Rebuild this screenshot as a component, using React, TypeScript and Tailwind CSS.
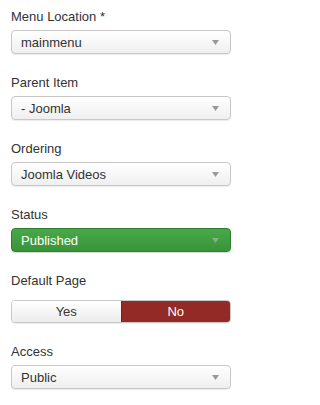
import React from 'react';

const Caret = ({ className }: { className: string }) => (
  <svg width="7" height="5" viewBox="0 0 7 5" className={className}>
    <path d="M0 0h7L3.5 5z" fill="currentColor" />
  </svg>
);

const Select = ({ value, green = false }: { value: string; green?: boolean }) => (
  <div
    className={
      green
        ? 'flex items-center justify-between h-[24px] w-[220px] rounded-[4px] border border-[#2f7d2f] bg-gradient-to-b from-[#48a848] to-[#3a943a] pl-[9px] pr-[11px] text-white shadow-[0_1px_1px_rgba(0,0,0,0.15)]'
        : 'flex items-center justify-between h-[24px] w-[220px] rounded-[4px] border border-[#c8c8c8] bg-gradient-to-b from-white to-[#efefef] pl-[9px] pr-[11px] text-[#333] shadow-[0_1px_1px_rgba(0,0,0,0.08)]'
    }
  >
    <span className="text-[13px] leading-none">{value}</span>
    <Caret className={green ? 'text-[#7fb27f]' : 'text-[#999]'} />
  </div>
);

const Field = ({ label, children }: { label: string; children: React.ReactNode }) => (
  <div className="flex flex-col">
    <label className="text-[13px] leading-[16px] text-[#333] mb-[5px]">{label}</label>
    {children}
  </div>
);

export default function App() {
  return (
    <div
      className="bg-white w-[276px] h-[405px] overflow-hidden pl-[11px] pt-[9px] flex flex-col gap-[21px]"
      style={{ fontFamily: '"Liberation Sans", Arial, sans-serif' }}
    >
      <Field label="Menu Location *">
        <Select value="mainmenu" />
      </Field>
      <Field label="Parent Item">
        <Select value="- Joomla" />
      </Field>
      <Field label="Ordering">
        <Select value="Joomla Videos" />
      </Field>
      <Field label="Status">
        <Select value="Published" green />
      </Field>
      <Field label="Default Page">
        <div className="mt-[6px] flex h-[23px] w-[220px] rounded-[4px] border border-[#c8c8c8] overflow-hidden text-[13px] leading-none shadow-[0_1px_1px_rgba(0,0,0,0.08)]">
          <div className="flex-1 flex items-center justify-center bg-gradient-to-b from-white to-[#ececec] text-[#333]">
            Yes
          </div>
          <div className="flex-1 flex items-center justify-center bg-[#942a25] border-l border-[#7a1f1b] text-white">
            No
          </div>
        </div>
      </Field>
      <Field label="Access">
        <Select value="Public" />
      </Field>
    </div>
  );
}
